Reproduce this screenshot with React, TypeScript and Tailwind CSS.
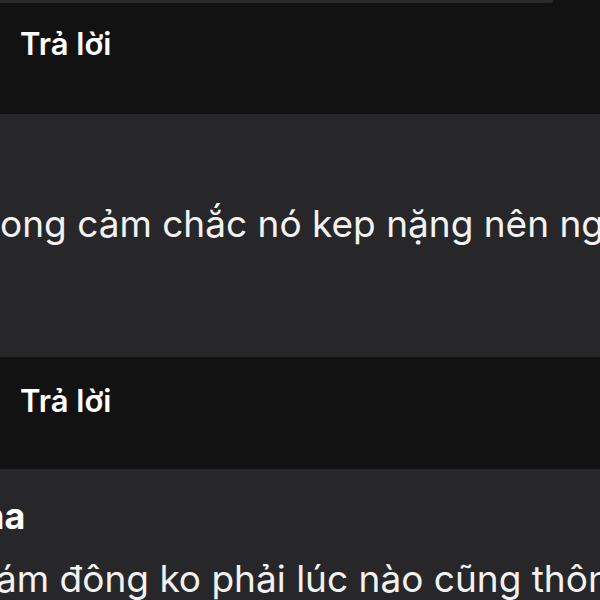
import React from "react";

const font = { fontFamily: "Inter, 'Noto Sans', 'Liberation Sans', sans-serif" };

function ReplyBar({ top, height }: { top?: boolean; height: string }) {
  return (
    <div className={`bg-[#121212] ${height} flex flex-col`}>
      {top ? (
        <div className="h-[3px] w-[553px] rounded-br-[6px] bg-[#2a2a2c]" />
      ) : null}
      <div
        className={`${top ? "mt-[22px]" : "mt-[25px]"} pl-[20px] text-[31px] leading-[38px] font-semibold text-white`}
      >
        Trả lời
      </div>
    </div>
  );
}

function Comment({ name, body, bodyShift, height }: { name: React.ReactNode; body: string; bodyShift: string; height: string }) {
  return (
    <div className={`bg-[#27272a] ${height} overflow-hidden flex flex-col pt-[25px] gap-[19px]`}>
      <div className="h-[44px] whitespace-nowrap text-[36px] leading-[44px] font-bold text-white">{name}</div>
      <div className={`h-[44px] whitespace-nowrap text-[37px] leading-[44px] font-normal text-[#f2f2f2] ${bodyShift}`}>
        {body}
      </div>
    </div>
  );
}

export default function App() {
  return (
    <div className="w-[600px] h-[600px] overflow-hidden bg-[#121212]" style={font}>
      <ReplyBar top height="h-[114px]" />
      <Comment
        name={<span>&nbsp;</span>}
        body="ong cảm chắc nó kep nặng nên ng"
        bodyShift="ml-0"
        height="h-[243px]"
      />
      <ReplyBar height="h-[112px]" />
      <Comment
        name={<span className="inline-block -ml-[18px]">na</span>}
        body="ám đông ko phải lúc nào cũng thôn"
        bodyShift="-ml-[4px]"
        height="h-[131px]"
      />
    </div>
  );
}
